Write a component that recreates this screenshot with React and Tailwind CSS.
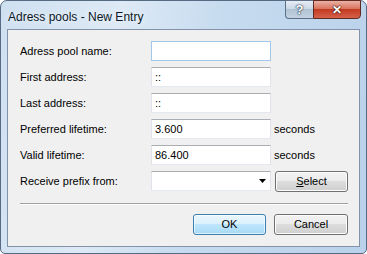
const font = { fontFamily: '"Liberation Sans", Arial, sans-serif' };

const Field = ({ value, focused }) => (
  <div
    className={`w-[120px] h-[20px] bg-white border px-[3px] flex items-center text-[11px] leading-none text-black ${
      focused
        ? "border-[#a3c7ea]"
        : "border-t-[#abadb3] border-x-[#e2e3ea] border-b-[#e3e9ef]"
    }`}
  >
    {value}
  </div>
);

const Row = ({ label, children }) => (
  <div className="flex items-center h-[20px]">
    <div className="w-[131px] text-[11px] text-black">{label}</div>
    {children}
  </div>
);

const Button = ({ children, primary, className = "" }) => (
  <div
    className={`h-[21px] rounded-[3px] border flex items-center justify-center text-[11px] text-black ${
      primary
        ? "border-[#3c7fb1] bg-[linear-gradient(#eaf6fd_0%,#d9f0fc_50%,#bee6fd_50%,#a7d9f5_100%)] shadow-[inset_0_0_0_1px_#ffffffa0]"
        : "border-[#707070] bg-[linear-gradient(#f2f2f2_0%,#ebebeb_50%,#dddddd_50%,#cfcfcf_100%)] shadow-[inset_0_0_0_1px_#fcfcfc]"
    } ${className}`}
  >
    {children}
  </div>
);

export default function App() {
  return (
    <div style={font} className="w-[367px] h-[254px] overflow-hidden bg-white">
      <div className="w-[367px] h-[254px] border border-[#576a84] rounded-t-[7px] rounded-b-[5px] bg-[linear-gradient(100deg,#cfe0f1_0%,#dde9f5_30%,#c6dbef_55%,#b9d1ea_100%)] flex flex-col">
        <div className="h-[28px] flex items-start justify-between pl-[7px] pr-[5px]">
          <div className="pt-[7px] text-[12px] text-[#0b1726] [text-shadow:0_0_6px_#ffffff]">
            Adress pools - New Entry
          </div>
          <div className="flex h-[19px] -mt-px">
            <div className="w-[28px] h-[19px] border border-[#5c6f86] border-r-0 rounded-bl-[4px] bg-[linear-gradient(#e6edf5_0%,#ccd9e6_45%,#b2c3d5_50%,#c2d2e2_100%)] flex items-center justify-center text-[13px] font-bold text-white [text-shadow:0_0_1px_#2c3f57,0_0_1px_#2c3f57,0_0_2px_#2c3f57]">
              ?
            </div>
            <div className="w-[48px] h-[19px] border border-[#5e2a22] rounded-br-[4px] bg-[linear-gradient(#eab1a5_0%,#d9755f_45%,#c33a22_50%,#d6624a_100%)] flex items-center justify-center text-[12px] font-bold text-white [text-shadow:0_0_1px_#4b1a12,0_0_1px_#4b1a12,0_0_2px_#4b1a12]">
              ✕
            </div>
          </div>
        </div>
        <div className="ml-[6px] w-[353px] h-[218px] border border-[#8293a9] bg-[#f0f0f0] pl-[12px] pr-[11px] pt-[11px]">
          <div className="flex flex-col gap-[6px]">
            <Row label="Adress pool name:">
              <Field value="" focused />
            </Row>
            <Row label="First address:">
              <Field value="::" />
            </Row>
            <Row label="Last address:">
              <Field value="::" />
            </Row>
            <Row label="Preferred lifetime:">
              <Field value="3.600" />
              <span className="ml-[3px] text-[11px] text-black">seconds</span>
            </Row>
            <Row label="Valid lifetime:">
              <Field value="86.400" />
              <span className="ml-[3px] text-[11px] text-black">seconds</span>
            </Row>
            <Row label="Receive prefix from:">
              <div className="w-[120px] h-[20px] bg-white border border-t-[#abadb3] border-x-[#e2e3ea] border-b-[#e3e9ef] flex items-center justify-end pr-[4px]">
                <svg width="7" height="4" viewBox="0 0 7 4">
                  <path d="M0 0h7L3.5 4z" fill="#000" />
                </svg>
              </div>
              <Button className="ml-[4px] w-[73px] h-[19px]">
                <span>
                  <span className="underline">S</span>elect
                </span>
              </Button>
            </Row>
          </div>
          <div className="mt-[12px] h-[2px] border-t border-[#a0a0a0] border-b border-b-white" />
          <div className="mt-[9px] flex justify-end gap-[8px]">
            <Button primary className="w-[73px]">
              OK
            </Button>
            <Button className="w-[74px]">Cancel</Button>
          </div>
        </div>
      </div>
    </div>
  );
}
